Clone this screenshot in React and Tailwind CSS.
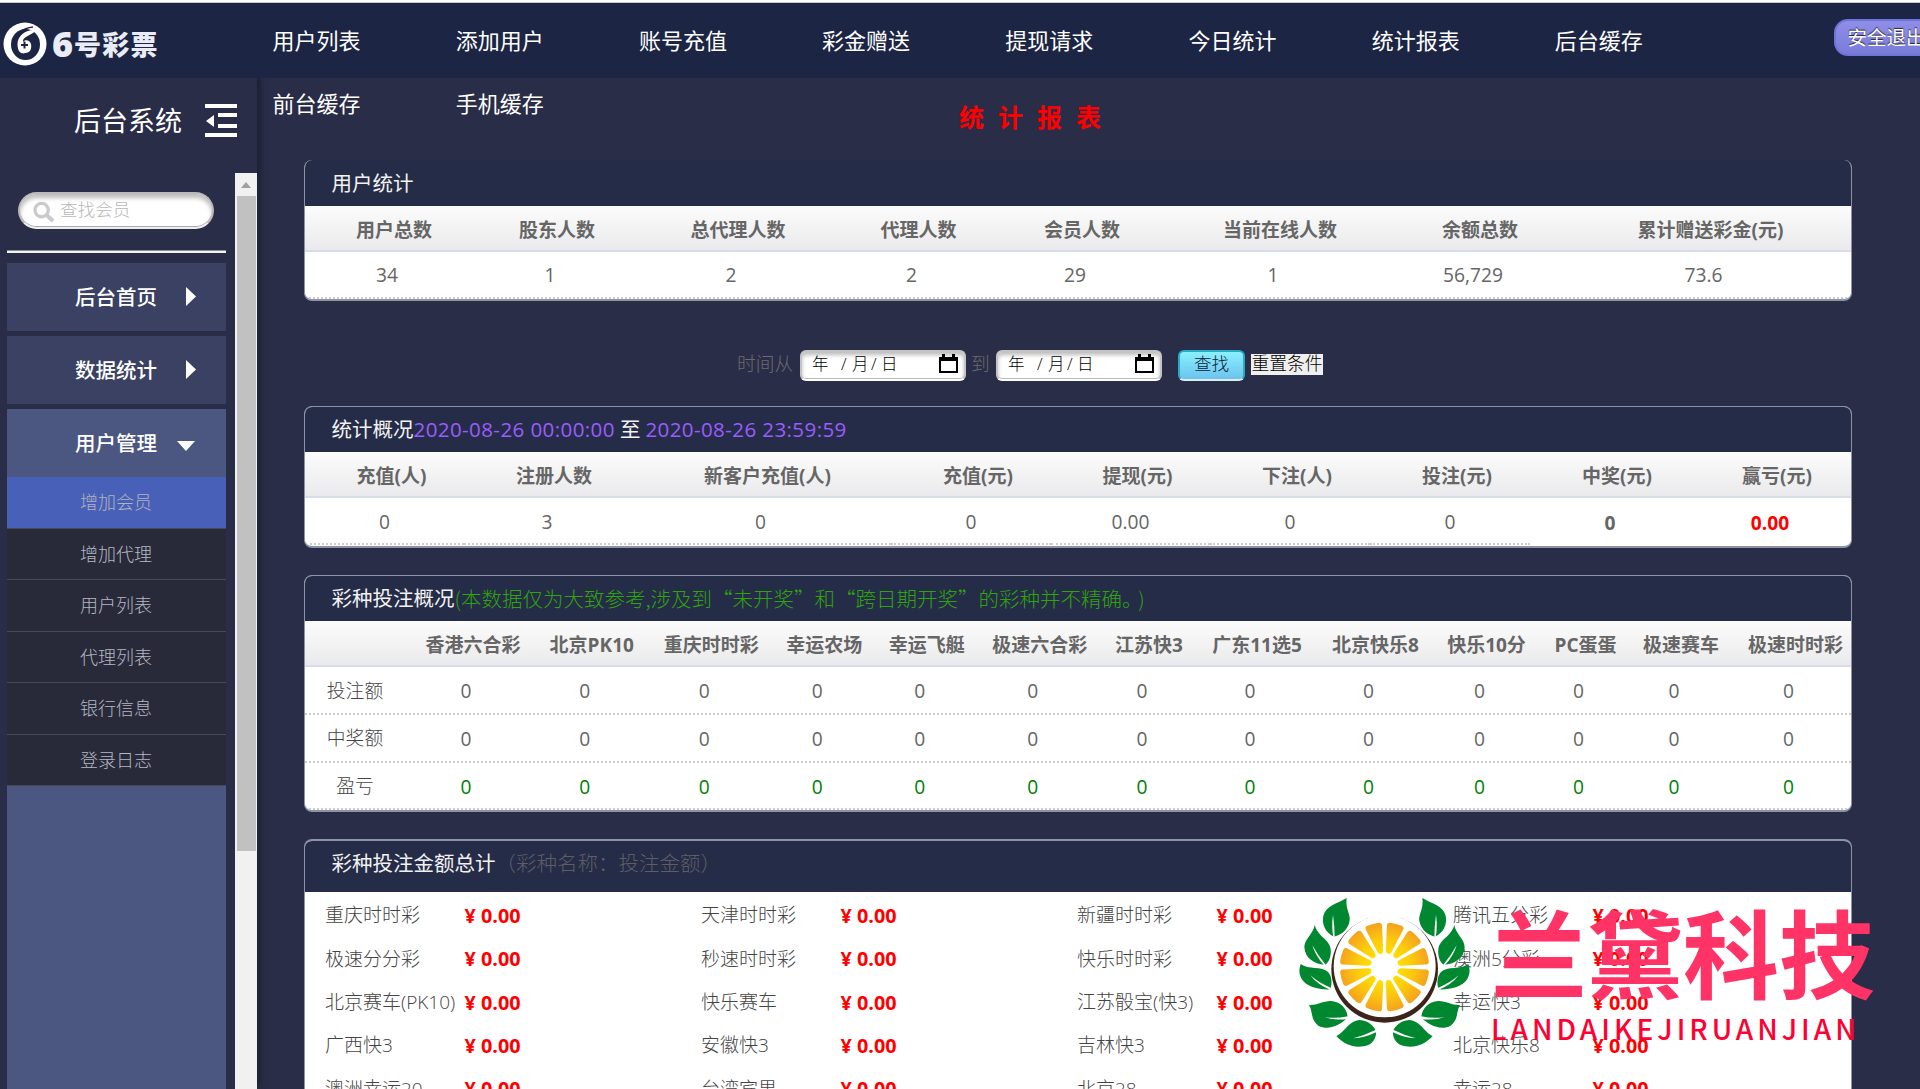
import React from "react";

const NAV = ["用户列表", "添加用户", "账号充值", "彩金赠送", "提现请求", "今日统计", "统计报表", "后台缓存", "前台缓存", "手机缓存"];
const SUB = ["增加会员", "增加代理", "用户列表", "代理列表", "银行信息", "登录日志"];

const USER_HEAD = ["用户总数", "股东人数", "总代理人数", "代理人数", "会员人数", "当前在线人数", "余额总数", "累计赠送彩金(元)"];
const USER_ROW = ["34", "1", "2", "2", "29", "1", "56,729", "73.6"];

const SUM_HEAD = ["充值(人)", "注册人数", "新客户充值(人)", "充值(元)", "提现(元)", "下注(人)", "投注(元)", "中奖(元)", "赢亏(元)"];
const SUM_ROW = ["0", "3", "0", "0", "0.00", "0", "0", "0", "0.00"];

const GAME_HEAD = ["", "香港六合彩", "北京PK10", "重庆时时彩", "幸运农场", "幸运飞艇", "极速六合彩", "江苏快3", "广东11选5", "北京快乐8", "快乐10分", "PC蛋蛋", "极速赛车", "极速时时彩"];

const TOTALS = [
  "重庆时时彩", "天津时时彩", "新疆时时彩", "腾讯五分彩",
  "极速分分彩", "秒速时时彩", "快乐时时彩", "澳洲5分彩",
  "北京赛车(PK10)", "快乐赛车", "江苏骰宝(快3)", "幸运快3",
  "广西快3", "安徽快3", "吉林快3", "北京快乐8",
  "澳洲幸运20", "台湾宾果", "北京28", "幸运28",
];

const USER_COLS = "grid grid-cols-[164px_162px_200px_161px_166px_230px_170px_291px]";
const SUM_COLS = "grid grid-cols-[159px_166px_261px_160px_159px_160px_160px_160px_160px]";
const GAME_COLS = "grid grid-cols-[102px_118px_119.5px_119.5px_106.5px_98.5px_127.5px_91px_125px_112px_110px_88px_103px_126px]";

function Panel({ title, children, className = "", headClass = "h-[45px]", border = "border-t border-t-[#8d93a6]" }) {
  return (
    <section className={`overflow-hidden rounded-lg border-x border-x-[#8d93a6] bg-white ${border} ${className}`}>
      <h2 className={`flex items-center bg-[#252c47] pl-[26.5px] text-[20.5px] text-[#f2f2f2] ${headClass}`}>{title}</h2>
      {children}
    </section>
  );
}

function HeadRow({ cells, cols }) {
  return (
    <div className={`${cols} h-[46px] items-center border-b-2 border-[#d7dde8] bg-linear-to-b from-[#fcfcfc] to-[#eaeaec] pt-[4px] text-[19px] font-bold text-[#666]`}>
      {cells.map((c, i) => (
        <div key={i} className="flex justify-center pl-[14px] whitespace-nowrap">{c}</div>
      ))}
    </div>
  );
}

function Logo() {
  return (
    <div className="flex w-[272.5px] shrink-0 items-center pt-[7px] pl-[3px]">
      <svg width="44" height="44" viewBox="0 0 44 44" className="shrink-0">
        <circle cx="22" cy="22" r="21.5" fill="#fff" />
        <ellipse cx="22.5" cy="22.5" rx="14.5" ry="15.5" fill="#1d2545" />
        <path d="M33 8 C24 7 14 13 14.5 23 C15 32 20 32 22 31 C27 31 29 27 28 22 C27 18 22 17 20 20 C19 14 29 14 33 8Z" fill="#fff" />
        <path d="M21.5 19.5v7M18 23h7" stroke="#1d2545" strokeWidth="2" />
        <path d="M30 5 C20 6 12 12 11 22" stroke="#1d2545" strokeWidth="1.6" fill="none" />
      </svg>
      <div className="ml-[5px] flex items-center leading-none font-black text-[#e9ebf5]">
        <span className="w-[22px] text-[36px]">6</span>
        <span className="text-[27px] tracking-[1.2px]">号彩票</span>
      </div>
    </div>
  );
}

function DateField() {
  return (
    <div className="flex h-[31px] w-[166px] items-center rounded-md border-2 border-[#c4c4c4] border-b-white bg-white px-[10px] pb-[3px] text-[16.5px] font-light text-black shadow-[inset_0_3px_4px_#bbb,inset_0_-1px_0_#bbb]">
      <span className="w-[29px]">年</span>
      <span className="w-[11px]">/</span>
      <span className="w-[19px]">月</span>
      <span className="w-[10px]">/</span>
      <span>日</span>
      <svg width="19" height="20" viewBox="0 0 19 20" className="ml-auto -mr-[4px]">
        <path d="M1 4h17v14H1z" fill="none" stroke="#000" strokeWidth="2" />
        <path d="M1 3h17v4H1zM3 0h3v3H3zM13 0h3v3h-3z" fill="#000" />
      </svg>
    </div>
  );
}

function Sidebar() {
  return (
    <aside className="relative z-10 flex w-[257px] shrink-0 flex-col bg-[#292d47] shadow-[3px_-2px_6px_#1b2033]">
      <div className="flex h-[95px] shrink-0 items-center pb-[10px] pl-[74px] text-[27px] text-white">
        <span className="w-[131px]">后台系统</span>
        <svg width="32" height="33" viewBox="0 0 32 33" fill="#fff">
          <path d="M0 0h32v4H0zM13 9h19v4H13zM13 20h19v4H13zM0 29h32v4H0zM1 17l8-6v12z" />
        </svg>
      </div>
      <div className="flex min-h-0 flex-1">
        <div className="flex w-[235px] flex-col pl-[7px]">
          <div className="mt-[19px] ml-[11px] flex h-[37px] w-[196px] items-center rounded-full border-2 border-[#b9b9b9] border-b-[#eee] bg-white pb-[2px] pl-[13px] text-[17.6px] font-light text-[#b8b8b8] shadow-[inset_0_4px_4px_#bdbdbd,inset_0_-1px_0_#aaa]">
            <svg width="22" height="22" viewBox="0 0 23 23" fill="none" stroke="#c9c9c9" strokeWidth="3.4" className="mt-[4px]">
              <circle cx="9" cy="9.5" r="7" />
              <path d="M14 14.5l7 6.5" strokeWidth="4.2" />
            </svg>
            <span className="ml-[5px]">查找会员</span>
          </div>
          <div className="mt-[21px] h-[3px] w-[219px] border-t border-[#8f8f8f] bg-[#f1f5f0]" />
          <div className="mt-[10px] flex w-[219px] flex-1 flex-col gap-[5px]">
            {["后台首页", "数据统计"].map((t) => (
              <div key={t} className="flex h-[68px] shrink-0 items-center bg-[#3a4162] pl-[68px] text-[20.5px] font-medium text-white">
                <span className="w-[111px]">{t}</span>
                <svg width="10" height="19" viewBox="0 0 10 19" fill="#fff" className="-mt-[2px]"><path d="M0 0l10 9.5-10 9.5z" /></svg>
              </div>
            ))}
            <div className="flex flex-1 flex-col bg-[#4b5780]">
              <div className="flex h-[68px] items-center pt-[1px] pl-[68px] text-[20.5px] font-medium text-white">
                <span className="w-[102px]">用户管理</span>
                <svg width="18" height="10" viewBox="0 0 18 10" fill="#fff" className="mt-[4px]"><path d="M0 0h18l-9 10z" /></svg>
              </div>
              {SUB.map((t, i) => (
                <div
                  key={t + i}
                  className={`flex h-[51.5px] items-center border-b border-[#474a56] pl-[73px] text-[18px] font-light ${i === 0 ? "bg-[#4860b7] text-[#b0b3be]" : "bg-[#282a3a] text-[#b5b7c2]"}`}
                >
                  {t}
                </div>
              ))}
            </div>
          </div>
        </div>
        <div className="flex w-[22px] flex-col bg-[#f1f1f1] px-[2px]">
          <div className="flex h-[23px] items-center justify-center">
            <svg width="10" height="6" viewBox="0 0 10 6" fill="#a0a0a0"><path d="M5 0l5 6H0z" /></svg>
          </div>
          <div className="h-[655px] w-[19px] bg-[#c1c1c1]" />
        </div>
      </div>
    </aside>
  );
}

const LEAVES = [
  ["M170 42C165 78 185 92 178 115C172 140 150 155 132 158C105 145 95 120 100 95C108 65 140 60 170 42Z", "M130 160Q124 128 129 92Q134 128 134 160Z"],
  ["M74 123C85 160 118 165 122 195C124 215 118 235 105 243C75 240 45 225 43 190C43 165 70 150 74 123Z", "M102 244Q76 215 67 184Q84 215 107 242Z"],
  ["M32 240C55 258 95 245 115 265C128 282 125 300 122 316C90 318 50 310 35 285C25 265 28 255 32 240Z", "M122 318Q82 302 61 274Q88 298 124 312Z"],
  ["M57 363C85 365 105 345 135 353C160 360 172 380 173 400C150 425 115 440 85 425C60 405 70 385 57 363Z", "M175 404Q135 411 103 399Q135 405 174 397Z"],
  ["M139 456C165 445 175 410 210 408C235 410 250 425 258 440C260 460 250 475 235 483C200 495 165 485 139 456Z", "M260 444Q225 461 190 463Q225 453 258 437Z"],
];

function Wreath() {
  const half = (
    <>
      {LEAVES.map(([leaf, vein]) => (
        <g key={leaf}>
          <path d={leaf} fill="#00872f" />
          <path d={vein} fill="#fff" />
        </g>
      ))}
    </>
  );
  return (
    <svg width="183" height="155" viewBox="0 0 549 465" className="absolute top-0 left-0 overflow-visible">
      <defs>
        <radialGradient id="citrus" gradientUnits="userSpaceOnUse" cx="283.5" cy="249" r="135">
          <stop offset="0.3" stopColor="#ffdf00" />
          <stop offset="0.6" stopColor="#fccb0b" />
          <stop offset="1" stopColor="#f5a11f" />
        </radialGradient>
      </defs>
      <g transform="translate(-24 -30)">
        <circle cx="284" cy="256" r="160" fill="#3b251a" />
        <path d="M150 80h268v60l-10 8a153 153 0 0 0-248 0l-10-8z" fill="#fff" />
        <circle cx="284" cy="247" r="153" fill="#fff" />
        {Array.from({ length: 12 }, (_, i) => {
          const p = (r, deg) => {
            const a = ((deg + i * 30) * Math.PI) / 180;
            return `${283.5 + r * Math.cos(a)} ${249 + r * Math.sin(a)}`;
          };
          return (
            <path
              key={i}
              d={`M${p(50, 15)}L${p(125, 7.5)}A125 125 0 0 1 ${p(125, 22.5)}Z`}
              fill="url(#citrus)"
              stroke="url(#citrus)"
              strokeWidth="18"
              strokeLinejoin="round"
            />
          );
        })}
        {half}
        <g transform="translate(567 0) scale(-1 1)">{half}</g>
      </g>
    </svg>
  );
}

function Watermark() {
  return (
    <div className="absolute top-[894px] left-[1298px] h-[160px] w-[590px]">
      <Wreath />
      <div className="absolute top-[4px] left-[193px] font-['Noto_Sans_CJK_SC',sans-serif] text-[96px] leading-[104px] font-bold whitespace-nowrap text-[#ff3366]">兰黛科技</div>
      <div className="absolute top-[116px] left-[193px] font-['Noto_Sans_CJK_SC',sans-serif] text-[28px] leading-[36px] font-medium tracking-[4px] whitespace-nowrap text-[#ff0033]">LANDAIKEJIRUANJIAN</div>
    </div>
  );
}

export default function App() {
  return (
    <div className="relative flex h-[1089px] w-[1920px] flex-col overflow-hidden bg-[#292d47] font-['Open_Sans','Noto_Sans_CJK_SC',sans-serif] leading-none">
      <div className="h-[3px] shrink-0 border-b border-[#c8c8cc] bg-white" />
      <header className="relative z-20 flex h-[75px] shrink-0 bg-[#1d2545]">
        <Logo />
        <nav className="flex h-[126px] w-[1490px] shrink-0 flex-wrap content-start text-[22px] text-white">
          {NAV.map((t) => (
            <a key={t} className="flex h-[63px] w-[183.2px] items-center pt-[11px]">{t}</a>
          ))}
        </nav>
        <button className="mt-[16px] ml-[71.5px] h-[37px] w-[108px] shrink-0 rounded-[14px] border-2 border-[#6f74d8] bg-linear-to-b from-[#8f8fe8] to-[#7a7ada] pr-[3px] text-[19.5px] text-white [text-shadow:0_-1px_1px_#222]">安全退出</button>
      </header>

      <div className="flex min-h-0 flex-1">
        <Sidebar />
        <main className="ml-[47px] w-[1548px]">
          <h1 className="h-[82px] pt-[26px] pl-[655px] text-[25px] leading-[26px] font-bold tracking-[14px] text-[#f00]">统计报表</h1>

          <Panel title="用户统计" className="h-[141px] border-b-2 border-b-[#8d93a6]" headClass="h-[46px]" border="">
            <HeadRow cells={USER_HEAD} cols={USER_COLS} />
            <div className={`${USER_COLS} h-[47px] items-center border-b-2 border-dotted border-[#ccc] pt-[1px] text-[19.2px] text-[#666]`}>
              {USER_ROW.map((v, i) => <div key={i} className="text-center">{v}</div>)}
            </div>
          </Panel>

          <div className="mt-[49px] flex h-[31px] items-center pl-[433px] text-[18.8px] font-light text-[#6b6b70]">
            <span className="w-[63px] pb-[3px]">时间从</span>
            <DateField />
            <span className="w-[30px] pb-[3px] pl-[5px]">到</span>
            <DateField />
            <button className="ml-[16px] h-[31px] w-[67px] rounded-md border-2 border-[#2ba9c4] border-b-[#d8eef5] bg-linear-to-b from-[#8af0ff] to-[#6cc3ee] pb-[3px] text-[17.5px] text-[#123]">查找</button>
            <span className="mb-[3px] ml-[6px] flex h-[21px] w-[72px] items-center justify-center bg-[#efefef] text-[17.8px] whitespace-nowrap text-black">重置条件</span>
          </div>

          <Panel
            className="mt-[25px] h-[142px] border-b-2 border-b-[#8d93a6]"
            title={
              <>
                统计概况<span className="tracking-[0.42px] text-[#9c5cff]">2020-08-26 00:00:00</span>
                <span className="mx-[5px]">至</span>
                <span className="tracking-[0.42px] text-[#9c5cff]">2020-08-26 23:59:59</span>
              </>
            }
          >
            <HeadRow cells={SUM_HEAD} cols={SUM_COLS} />
            <div className={`${SUM_COLS} h-[47px] text-[19.2px] text-[#666]`}>
              {SUM_ROW.map((v, i) => (
                <div key={i} className={`flex items-center justify-center pt-[2px] ${i < 7 ? "border-b-2 border-dotted border-[#ccc]" : "font-bold"} ${i === 8 ? "text-[#f00]" : ""}`}>{v}</div>
              ))}
            </div>
          </Panel>

          <Panel
            className="mt-[27px] h-[237px] border-b-2 border-b-[#8d93a6]"
            title={
              <>
                彩种投注概况
                <span className="pb-[1px] font-['Noto_Sans_CJK_SC',sans-serif] font-light whitespace-nowrap text-[#2fa50c]">
                  (本数据仅为大致参考,涉及到“未开奖”和“跨日期开奖”的彩种并不精确。<span className="ml-[6px]">)</span>
                </span>
              </>
            }
          >
            <HeadRow cells={GAME_HEAD} cols={GAME_COLS} />
            {["投注额", "中奖额", "盈亏"].map((label, r) => (
              <div key={label} className={`${GAME_COLS} h-[47.8px] items-center border-b-2 border-dotted border-[#ccc] pt-[2px] text-center text-[19.2px] ${r === 2 ? "text-[#008000]" : "text-[#666]"}`}>
                <div className="pr-[2px] text-[18.8px] font-light text-[#444]">{label}</div>
                {GAME_HEAD.slice(1).map((g) => <div key={g}>0</div>)}
              </div>
            ))}
          </Panel>

          <Panel
            className="mt-[27px] h-[400px]"
            border="border-t-2 border-t-[#8d93a6]"
            headClass="h-[51px] pb-[6px]"
            title={<>彩种投注金额总计<span className="font-light text-[#5e5f66]">（彩种名称：投注金额）</span></>}
          >
            <div className="grid grid-cols-[repeat(4,376px)] pt-[2px] pl-[20px] text-[19px]">
              {TOTALS.map((t) => (
                <div key={t} className="flex h-[43.4px] items-center whitespace-nowrap">
                  <span className="w-[139.5px] font-light text-[#444]">{t}</span>
                  <b className="text-[19.8px] text-[#f00]">¥ 0.00</b>
                </div>
              ))}
            </div>
          </Panel>
        </main>
      </div>
      <Watermark />
    </div>
  );
}
